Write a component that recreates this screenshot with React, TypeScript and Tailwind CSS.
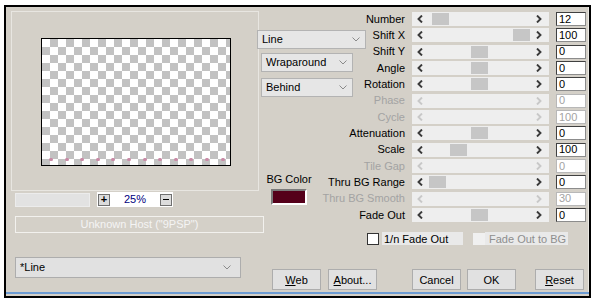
import type { ReactNode } from "react";

type Row = { label: string; value: string; thumb?: number; disabled?: boolean };

const rows: Row[] = [
  { label: "Number", value: "12", thumb: 20 },
  { label: "Shift X", value: "100", thumb: 101 },
  { label: "Shift Y", value: "0", thumb: 59 },
  { label: "Angle", value: "0", thumb: 59 },
  { label: "Rotation", value: "0", thumb: 59 },
  { label: "Phase", value: "0", disabled: true },
  { label: "Cycle", value: "100", disabled: true },
  { label: "Attenuation", value: "0", thumb: 59 },
  { label: "Scale", value: "100", thumb: 38 },
  { label: "Tile Gap", value: "0", disabled: true },
  { label: "Thru BG Range", value: "0", thumb: 17 },
  { label: "Thru BG Smooth", value: "30", disabled: true },
  { label: "Fade Out", value: "0", thumb: 59 },
];

function Arrow({ dir, color }: { dir: "left" | "right"; color: string }) {
  const pts = dir === "left" ? "5,0.5 1.5,4 5,7.5" : "1,0.5 4.5,4 1,7.5";
  return (
    <svg width="6" height="8" viewBox="0 0 6 8">
      <polyline points={pts} fill="none" stroke={color} strokeWidth="1.9" />
    </svg>
  );
}

function Slider({ thumb, disabled }: { thumb?: number; disabled?: boolean }) {
  const c = disabled ? "#c8c8c8" : "#3a3a3a";
  return (
    <div className="relative flex h-[14px] w-[137px] items-center justify-between bg-[#eeeeee] pl-[5px] pr-[7px]">
      <Arrow dir="left" color={c} />
      <Arrow dir="right" color={c} />
      {thumb !== undefined && (
        <div className="absolute top-[1px] h-[12px] w-[17px] bg-[#c6c6c6]" style={{ left: thumb }} />
      )}
    </div>
  );
}

function Chevron() {
  return (
    <svg width="8" height="5" viewBox="0 0 8 5">
      <polyline points="0.5,0.5 4,4 7.5,0.5" fill="none" stroke="#8a8a8a" strokeWidth="1" />
    </svg>
  );
}

function Select({ label, className }: { label: string; className: string }) {
  return (
    <div
      className={`flex items-center justify-between border border-[#b3b3b3] bg-[#e6e6e6] pl-[4px] pr-[5px] text-[11px] text-black ${className}`}
    >
      <span>{label}</span>
      <Chevron />
    </div>
  );
}

function Button({ children, className = "" }: { children: ReactNode; className?: string }) {
  return (
    <div
      className={`flex h-[21px] w-[49px] items-center justify-center border border-[#adadad] bg-[#e1e1e1] text-[11px] text-black ${className}`}
    >
      {children}
    </div>
  );
}

export default function App() {
  return (
    <div className="h-[302px] w-[593px] overflow-hidden bg-white pl-[4px] pt-[5px] font-['Liberation_Sans',Arial,sans-serif]">
      <div className="flex h-[293px] w-[587px] flex-col border-2 border-black bg-[#d4d0c8]">
        <div className="flex flex-1 border-r border-[#ebe9e4]">
          {/* Left: preview */}
          <div className="flex w-[251px] shrink-0 flex-col pt-[4px]">
            <div className="ml-[5px] h-[180px] w-[248px] border border-[#e8e6e1] pl-[29px] pt-[26px]">
              <div className="relative h-[128px] w-[190px] border border-black bg-[repeating-conic-gradient(#c2c2c2_0_25%,#ffffff_0_50%)] bg-[length:16px_16px]">
                <div className="absolute bottom-[4px] left-[7px] flex gap-[11.6px]">
                  {Array.from({ length: 12 }).map((_, i) => (
                    <div key={i} className="h-[3px] w-[4px] rounded-full bg-[#c98aa6]" />
                  ))}
                </div>
              </div>
            </div>

            {/* Zoom row */}
            <div className="ml-[9px] mt-[1px] flex items-center">
              <div className="h-[14px] w-[75px] border border-[#ececec] bg-[#e2e2e2]" />
              <div className="ml-[7px] flex h-[15px] w-[76px] items-center bg-white pl-[1px] pr-[1px]">
                <div className="flex h-[12px] w-[12px] items-center justify-center border border-[#707070] bg-[#dcdcdc] text-[11px] font-bold leading-none text-black">
                  +
                </div>
                <span className="flex-1 text-center text-[11px] text-[#000080]">25%</span>
                <div className="flex h-[12px] w-[12px] items-center justify-center border border-[#707070] bg-[#dcdcdc]">
                  <div className="h-[1px] w-[6px] bg-black" />
                </div>
              </div>
            </div>

            {/* Host */}
            <div className="ml-[9px] mt-[9px] flex h-[17px] w-[249px] shrink-0 items-center justify-center border border-[#f2f1ee] text-[11px] text-[#f4f4f4]">
              Unknown Host ("9PSP")
            </div>

            <Select label="*Line" className="ml-[9px] mt-[24px] h-[21px] w-[226px] !bg-[#e1e1e1] !border-[#adadad] pl-[3px] pr-[9px]" />
          </div>

          {/* Right side */}
          <div className="flex flex-1 flex-col">
            <div className="flex">
              {/* Middle controls */}
              <div className="flex w-[63px] shrink-0 flex-col pt-[23px]">
                <Select label="Line" className="h-[19px] w-[109px] shrink-0" />
                <Select label="Wraparound" className="ml-[4px] mt-[4px] h-[19px] w-[92px] shrink-0" />
                <Select label="Behind" className="ml-[4px] mt-[6px] h-[19px] w-[92px] shrink-0" />
                <div className="ml-[2px] mt-[75px] flex w-[60px] flex-col items-center">
                  <span className="h-[14px] text-[11px] leading-[14px] text-black">BG Color</span>
                  <div className="mt-[3px] h-[16px] w-[36px] border-2 border-b-white border-l-[#7a7a7a] border-r-white border-t-[#7a7a7a] bg-[#55001a]" />
                </div>
              </div>

              {/* Slider rows */}
              <div className="flex flex-1 flex-col pt-[4px]">
                {rows.map((r) => (
                  <div key={r.label} className="flex h-[16.33px] items-center">
                    <span
                      className={`w-[85px] text-right text-[11px] leading-none ${r.disabled ? "text-[#a3a3a3]" : "text-black"}`}
                    >
                      {r.label}
                    </span>
                    <div className="ml-[7px]">
                      <Slider thumb={r.thumb} disabled={r.disabled} />
                    </div>
                    <div
                      className={`ml-[7px] flex h-[14px] w-[30px] items-center border bg-white pl-[2px] text-[11px] leading-none ${
                        r.disabled
                          ? "border-[#b8b8b8] text-[#a3a3a3]"
                          : "border-b-[#8c8c8c] border-l-[#404040] border-r-[#8c8c8c] border-t-[#404040] text-black"
                      }`}
                    >
                      {r.value}
                    </div>
                  </div>
                ))}
              </div>
            </div>

            {/* Checkboxes */}
            <div className="ml-[110px] mt-[9px] flex h-[13px] items-center text-[11px]">
              <div className="h-[12px] w-[12px] border border-[#333333] bg-white" />
              <div className="ml-[3px] flex h-[13px] w-[81px] items-center bg-[#e9e9e9] pl-[2px] text-black">1/n Fade Out</div>
              <div className="ml-[10px] h-[12px] w-[12px] bg-[#f0f0f0]" />
              <div className="flex h-[13px] w-[83px] items-center bg-[#e9e9e9] pl-[4px] text-[#8e8e8e]">Fade Out to BG</div>
            </div>

            {/* Buttons */}
            <div className="ml-[15px] mt-[24px] flex">
              <Button>
                <span className="underline">W</span>eb
              </Button>
              <Button className="ml-[7px]">
                <span className="underline">A</span>bout...
              </Button>
              <Button className="ml-[35px]">Cancel</Button>
              <Button className="ml-[6px]">OK</Button>
              <Button className="ml-[19px]">
                <span className="underline">R</span>eset
              </Button>
            </div>
          </div>
        </div>
        <div className="h-[2px] bg-[#6c9bd2]" />
        <div className="h-[2px]" />
      </div>
    </div>
  );
}
